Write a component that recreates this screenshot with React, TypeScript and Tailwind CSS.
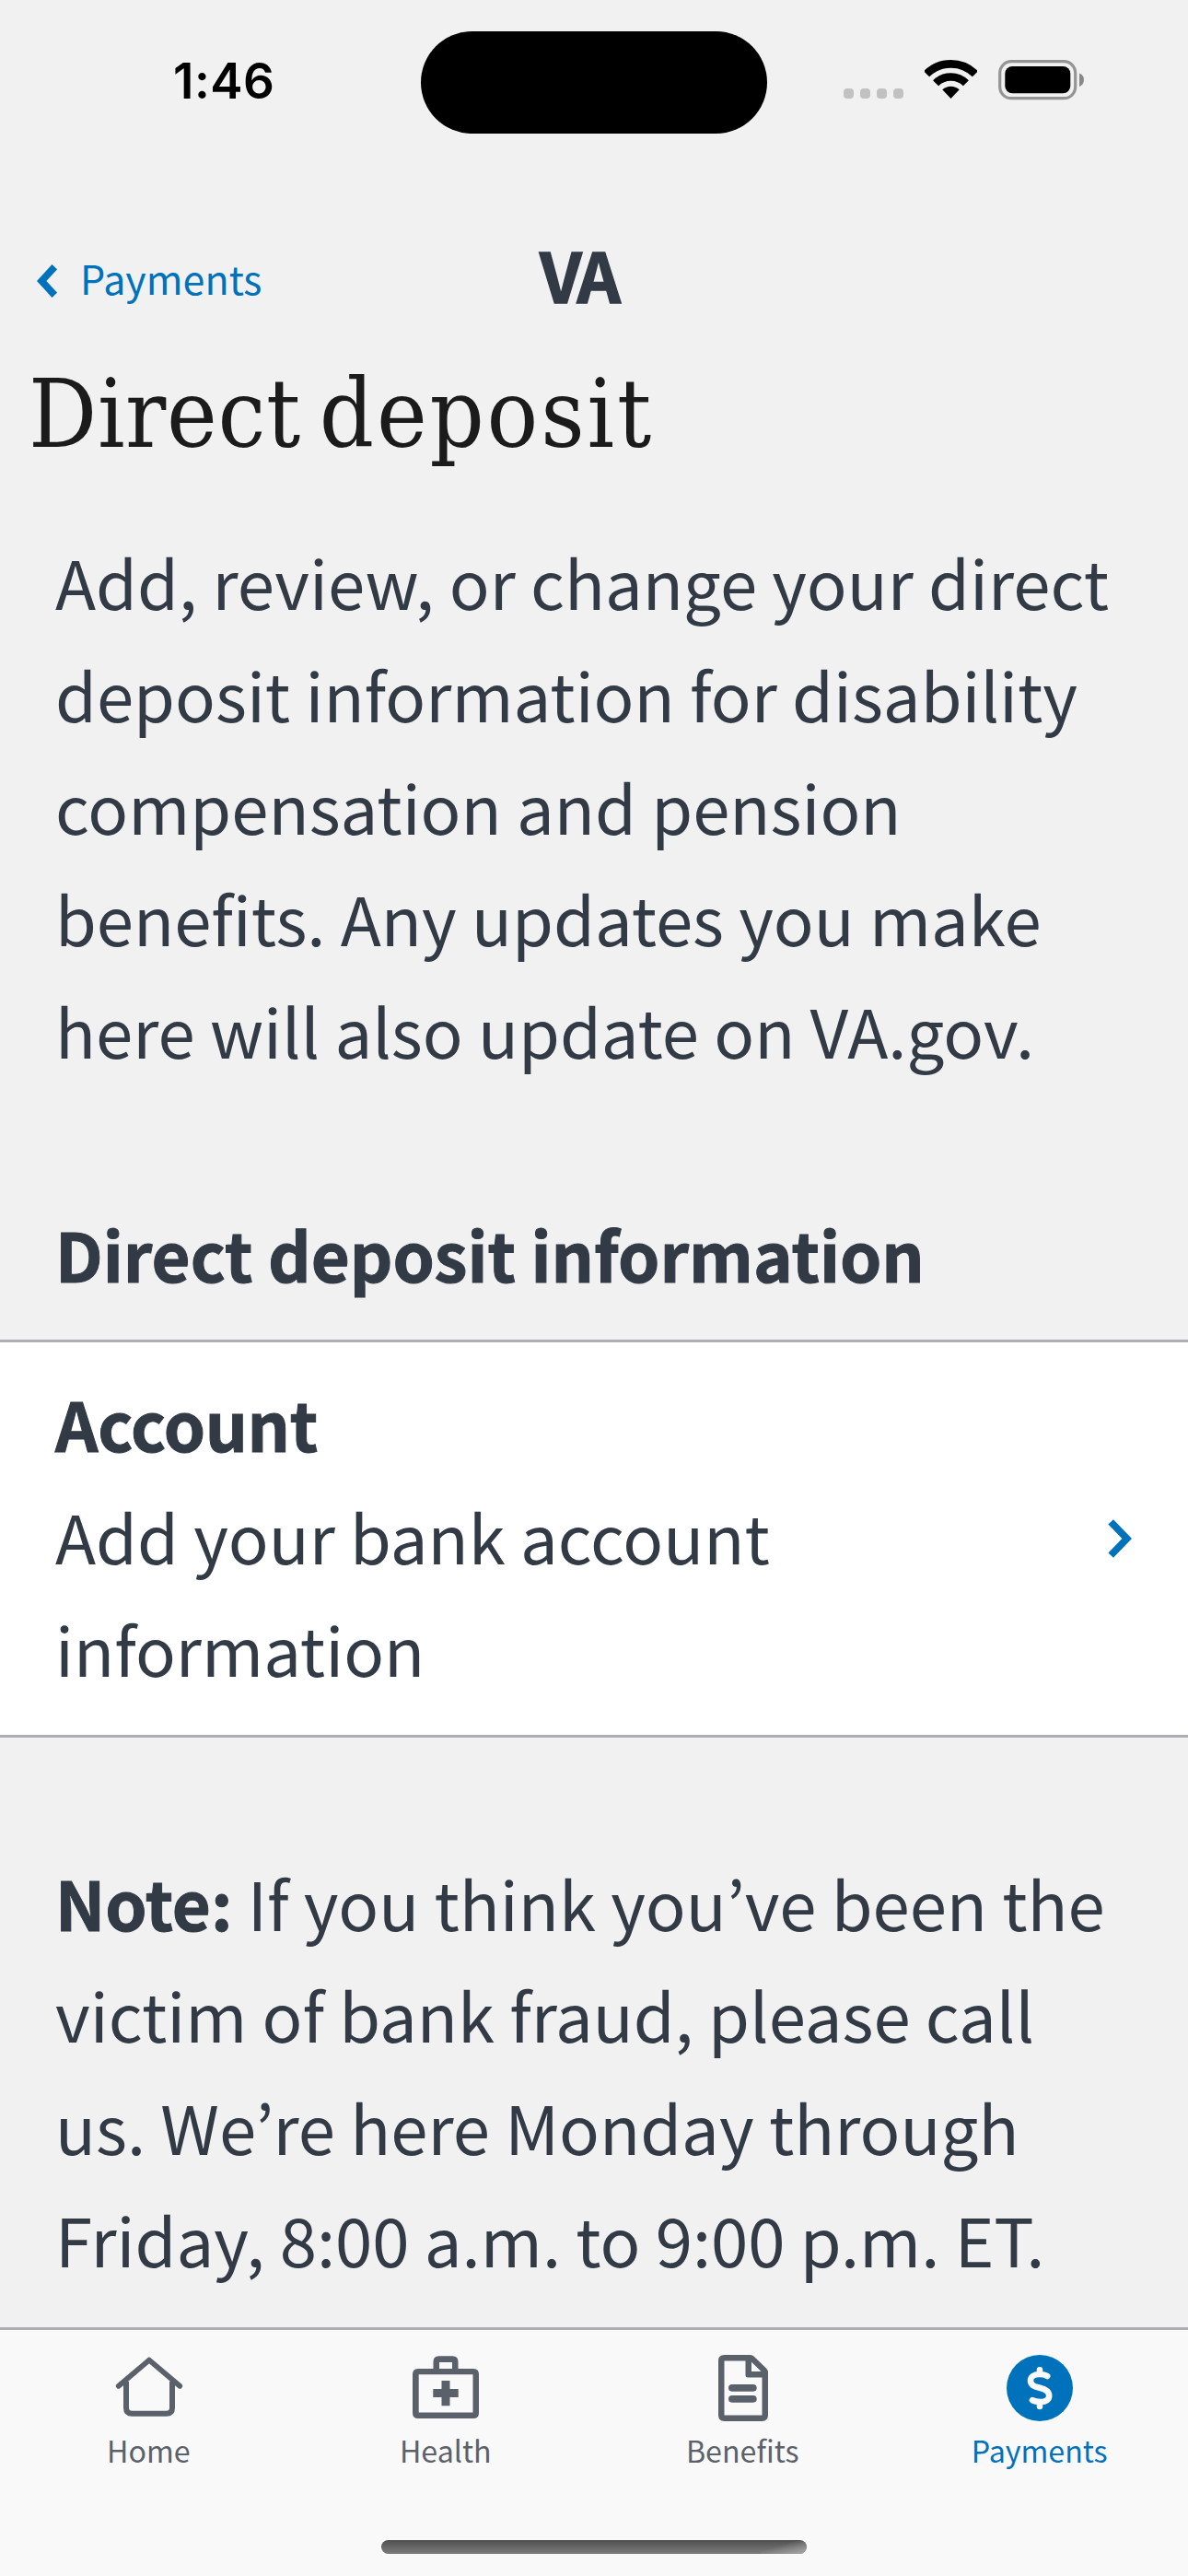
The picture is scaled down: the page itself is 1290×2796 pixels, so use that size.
import type { ReactNode } from "react";

function HomeIcon() {
  return (
    <svg viewBox="0 0 90 90" className="size-[90px]" fill="none" stroke="currentColor" strokeLinecap="round" strokeLinejoin="round">
      <path d="M11.800 41.800 45 13.600 78.200 41.800" strokeWidth="5.800" />
      <path d="M20 37V65.500Q20 71.800 26.500 71.800H63.500Q70 71.800 70 65.500V37" strokeWidth="6" strokeLinecap="butt" />
    </svg>
  );
}

function HealthIcon() {
  return (
    <svg viewBox="0 0 90 90" className="size-[90px]" fill="currentColor" fillRule="evenodd">
      <path d="M31.500 23V15.500Q31.500 9.300 37.700 9.300H52.300Q58.500 9.300 58.500 15.500V23H75Q81 23 81 29V71Q81 77 75 77H15Q9 77 9 71V29Q9 23 15 23ZM38 16V23H52V16ZM15.700 29.300V70.500H74.500V29.300Z" />
      <path d="M40.500 36H49.500V45H58.700V54H49.500V63.300H40.500V54H31.300V45H40.500Z" />
    </svg>
  );
}

function BenefitsIcon() {
  return (
    <svg viewBox="0 0 90 90" className="size-[90px]" fill="currentColor" fillRule="evenodd">
      <path d="M24.500 8H53Q55 8 56.500 9.500L70 22.500Q72 24.500 72 27V73.500Q72 80 65.500 80H24.500Q18 80 18 73.500V14.500Q18 8 24.500 8ZM24.500 14.500V73.500H65.500V32.500H50Q47.500 32.500 47.500 30V14.500ZM54 15.800V26H64.500Z" />
      <rect x="29" y="40" width="30.700" height="7.700" rx="3.850" />
      <rect x="29" y="52" width="30.700" height="7.700" rx="3.850" />
    </svg>
  );
}

function PaymentsIcon() {
  return (
    <svg viewBox="0 0 90 90" className="size-[90px]" fill="none">
      <circle cx="45" cy="44" r="36" fill="currentColor" />
      <path
        d="M53.200 31C50.500 29.300 47.500 29 44.500 29C38.500 29 35 32 35 36C35 40.500 38.500 42 45 43.800C52 45.700 55.200 47.700 55.200 52.300C55.200 56.800 51.500 59 46.500 59C42.500 59 39.500 58.700 37 57.200M45 24.300V29M45 59V64"
        stroke="#f9f9f9"
        strokeWidth="6.600"
        strokeLinecap="round"
      />
    </svg>
  );
}

function StatusBar() {
  return (
    <div className="flex h-[240px] items-start">
      <div className="w-[457px] pt-[56px] pl-[188px] font-['Inter',sans-serif] text-[53px] leading-[64px] font-semibold tracking-[0.500px] text-black">
        1:46
      </div>
      <div className="mt-[33.500px] h-[111px] w-[376px] rounded-full bg-black" />
      <div className="flex gap-[6.700px] pt-[96px] pl-[83px]">
        {[0, 1, 2, 3].map((n) => (
          <div key={n} className="h-[11px] w-[11.300px] rounded-[4px] bg-[#c1c1c1]" />
        ))}
      </div>
      <svg viewBox="0 0 57 42" className="mt-[65px] ml-[22.500px] h-[42px] w-[57px]" fill="none" stroke="#000">
        <path d="M2.100 15.300A37.300 37.300 0 0 1 54.900 15.300" strokeWidth="8.600" />
        <path d="M12.100 25.300A23.200 23.200 0 0 1 44.900 25.300" strokeWidth="8.500" />
        <path d="M28.500 42 19.300 32.300A13.400 13.400 0 0 1 37.700 32.300Z" fill="#000" stroke="none" />
      </svg>
      <svg viewBox="0 0 94 44" className="mt-[65px] ml-[23.500px] h-[44px] w-[94px]">
        <rect x="1.700" y="1.700" width="82" height="40" rx="12.500" fill="none" stroke="#959595" strokeWidth="3.200" />
        <rect x="7.300" y="7" width="71" height="29.300" rx="8" fill="#000" />
        <path d="M88 14.500Q93 16.500 93 21.700T88 29Z" fill="#888" />
      </svg>
    </div>
  );
}

function Tab({ label, icon, active }: { label: string; icon: ReactNode; active?: boolean }) {
  return (
    <div className={`flex w-1/4 flex-col items-center pt-[19px] ${active ? "text-[#0071bb]" : "text-[#5b616b]"}`}>
      <div className="ml-px">{icon}</div>
      <span className="-mt-px text-[32.200px] leading-[44px]">{label}</span>
    </div>
  );
}

export default function App() {
  return (
    <div className="flex h-[2796px] w-[1290px] flex-col overflow-hidden bg-[#f1f1f1] font-['Noto_Sans_CJK_JP',sans-serif] text-[#323a45]">
      <StatusBar />

      <header className="flex h-[150px] items-start">
        <svg viewBox="0 0 22 36" className="mt-[47px] ml-[40px] h-[36px] w-[22px] text-[#0071bb]" fill="none" stroke="currentColor" strokeWidth="7.600">
          <path d="M19.300 2.700 5.200 18 19.300 33.300" />
        </svg>
        <span className="mt-[29px] ml-[25px] w-[499px] text-[43px] leading-[64px] text-[#0071bb]">Payments</span>
        <span className="mt-[9px] text-[74px] leading-[96px] font-bold tracking-[-4px] [-webkit-text-stroke:1.500px_currentColor]">VA</span>
      </header>

      <h1 className="h-[180px] pl-[31px] font-['DejaVu_Serif_Condensed','DejaVu_Serif',serif] text-[103px] leading-[118px] tracking-[0.600px] text-[#1b1b1b] [word-spacing:-10px]">
        Direct <span className="tracking-[2.800px]">deposit</span>
      </h1>

      <p className="h-[729px] pl-[60px] text-[72.500px] leading-[121.800px] whitespace-nowrap">
        Add, review, or change your direct
        <br />
        deposit information for disability
        <br />
        compensation and pension
        <br />
        benefits. Any updates you make
        <br />
        here will also update on VA.gov.
      </p>

      <h2 className="h-[155px] pt-px pl-[60px] text-[72.500px] leading-[121.800px] font-bold [-webkit-text-stroke:1px_currentColor]">
        Direct deposit information
      </h2>

      <section className="flex h-[432px] items-center justify-between border-y-[3px] border-[#adadb3] bg-white pr-[61px] pl-[60px]">
        <div className="-mt-[6px] text-[72.500px] leading-[121.800px]">
          <div className="font-bold tracking-[-0.300px] [-webkit-text-stroke:1px_currentColor]">Account</div>
          <div>
            Add your bank account
            <br />
            information
          </div>
        </div>
        <svg viewBox="0 0 26 42" className="h-[42px] w-[26px] text-[#0071bb]" fill="none" stroke="currentColor" strokeWidth="7.600">
          <path d="M3.200 2.900 20.700 21 3.200 39.100" />
        </svg>
      </section>

      <p className="flex-1 pt-[117.500px] pl-[60px] text-[72.500px] leading-[121.800px] whitespace-nowrap">
        <b className="[-webkit-text-stroke:1px_currentColor]">Note:</b> If you think you’ve been the
        <br />
        victim of bank fraud, please call
        <br />
        us. We’re here Monday through
        <br />
        Friday, 8:00 a.m. to 9:00 p.m. ET.
      </p>

      <nav className="flex h-[270px] shrink-0 flex-col items-center border-t-[3px] border-[#adadb3] bg-[#f9f9f9]">
        <div className="flex h-[228px] w-full">
          <Tab label="Home" icon={<HomeIcon />} />
          <Tab label="Health" icon={<HealthIcon />} />
          <Tab label="Benefits" icon={<BenefitsIcon />} />
          <Tab label="Payments" icon={<PaymentsIcon />} active />
        </div>
        <div className="h-[15px] w-[462px] overflow-hidden rounded-full bg-linear-to-b from-[#505050] to-[#7c7c7c]">
          <div className="ml-auto h-full w-[50px] bg-linear-to-br from-transparent from-40% to-[#a8a8a8]" />
        </div>
      </nav>
    </div>
  );
}
